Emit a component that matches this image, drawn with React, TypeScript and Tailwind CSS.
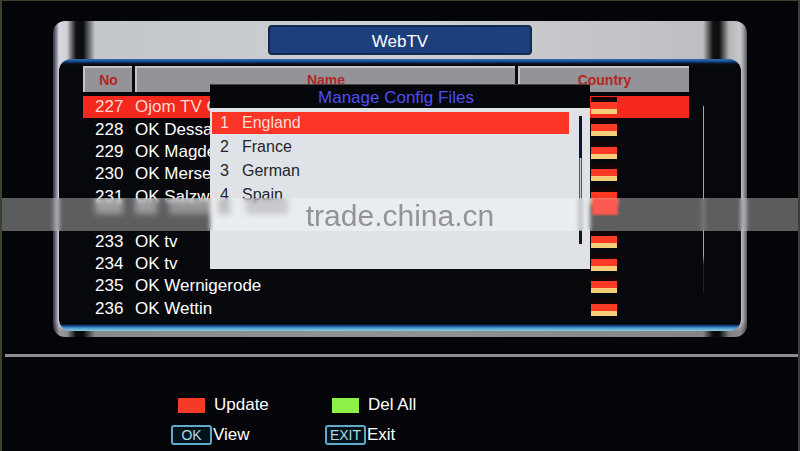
import clsx from 'clsx';

type Channel = { no: number; name: string; hidden?: boolean };

const CHANNELS: Channel[] = [
  { no: 227, name: 'Ojom TV G' },
  { no: 228, name: 'OK Dessa' },
  { no: 229, name: 'OK Magde' },
  { no: 230, name: 'OK Merse' },
  { no: 231, name: 'OK Salzw' },
  { no: 232, name: '', hidden: true },
  { no: 233, name: 'OK tv' },
  { no: 234, name: 'OK tv' },
  { no: 235, name: 'OK Wernigerode' },
  { no: 236, name: 'OK Wettin' },
];

const CONFIG_FILES = ['England', 'France', 'German', 'Spain'];

export default function App() {
  return (
    <div className="relative min-h-screen overflow-hidden border-x-2 border-t border-[#3b4130] bg-[#040509] font-['Liberation_Sans',Arial,sans-serif] text-white">
      <main className="mx-[51px] mt-5 rounded-[12px] bg-[linear-gradient(180deg,transparent_300px,rgba(0,0,0,0.3)_310px),linear-gradient(90deg,#33333f_0,#77778a_3px,#d8d9e2_6px,#cfd1d5_14px,#777_18px,#101114_23px,#08090c_30px,#c3c7ca_42px,#cdd1d4_50%,#bfbfc3_calc(100%-44px),#111_calc(100%-34px),#0c0c0e_calc(100%-28px),#b5b5b8_calc(100%-18px),#c9c9cc_calc(100%-7px),#a5a5ac_calc(100%-4px),#55555e_100%)] px-[6px] pb-[6px]">
        <header className="flex h-[38px] items-center justify-center">
          <h1 className="h-[30px] w-[264px] rounded-[4px] border-2 border-[#122a50] bg-[#1c3f7c] text-center text-[17px] leading-[29px]">
            WebTV
          </h1>
        </header>
        <section className="flex h-[272px] rounded-[12px] bg-[linear-gradient(180deg,#2a6cb0_0,#1f5a9c_2px,#0a1c3c_4px,#07080c_6px,#07080c_calc(100%-7px),#124d96_calc(100%-5px),#4b9ccb_calc(100%-3px),#8fcbe0_100%)] pt-[7px] pr-[37px] pl-[24px]">
          <ChannelTable />
          <div className="mt-[40px] ml-[14px] h-[187px] w-px bg-linear-to-b from-[#a5a5a8] from-80% to-[#1c1c4c] to-85%" />
        </section>
      </main>

      <ConfigDialog />

      <hr className="mt-[17px] ml-[3px] h-[3px] border-0 bg-[#8f8d92]" />
      <Legend />
      <Watermark />
    </div>
  );
}

function ChannelTable() {
  const head =
    'h-[26px] border-t-2 border-l-2 border-[#c4c4c9] bg-[#939398] text-[14px] leading-[24px] font-bold text-[#b3261f]';
  return (
    <table className="h-[254px] flex-1 table-fixed border-collapse text-[17px] leading-[22px]">
      <thead>
        <tr className="h-[30px] align-top">
          <th className="w-[52px] p-0">
            <div className={clsx(head, 'mr-[3px]')}>No</div>
          </th>
          <th className="p-0">
            <div className={clsx(head, 'mr-[3px]')}>Name</div>
          </th>
          <th className="w-[171px] p-0">
            <div className={head}>Country</div>
          </th>
        </tr>
      </thead>
      <tbody>
        {CHANNELS.map((c, i) => (
          <tr key={c.no} className={clsx(i === 0 && 'bg-[#f5281e] text-[#ffd9d2]')}>
            <td className="p-0 pl-[12px]">{c.hidden ? <>&nbsp;</> : c.no}</td>
            <td className="p-0 whitespace-nowrap">{c.name}</td>
            <td className="p-0 pt-px pl-[73px] align-top">{!c.hidden && <Flag />}</td>
          </tr>
        ))}
      </tbody>
    </table>
  );
}

function Flag() {
  return (
    <div className="flex w-[26px] flex-col">
      <i className="h-[5px] bg-[#140606]" />
      <i className="h-[7px] bg-[#fb3a26]" />
      <i className="h-[5px] bg-[#f6cd79]" />
    </div>
  );
}

function ConfigDialog() {
  return (
    <div
      role="dialog"
      aria-labelledby="config-title"
      className="absolute inset-x-0 top-[83px] mx-auto w-[380px] border-t border-[#45454a] bg-[#06070b]"
    >
      <h2 id="config-title" className="h-[23px] pr-2 text-center text-[17px] leading-[25px] text-[#4f4df5]">
        Manage Config Files
      </h2>
      <div className="flex h-[161px] justify-between bg-[#dfe3e7] pt-1 pr-2 pl-[2px]">
        <ul className="w-[357px]">
          {CONFIG_FILES.map((file, i) => (
            <li key={file} className="h-6">
              <button
                className={clsx(
                  'flex h-[22px] w-full items-center pl-2 text-left text-[16px]',
                  i === 0 ? 'bg-[#fc3527] text-[#ffdcd6]' : 'text-[#22252e]',
                )}
              >
                <span className="w-[22px]">{i + 1}</span>
                {file}
              </button>
            </li>
          ))}
        </ul>
        <div className="mt-1 flex h-[128px] w-[3px] flex-col">
          <div className="h-[42px] bg-[#10142c]" />
          <div className="flex-1 border-x border-[#55565c] bg-[#c9cacf]" />
          <div className="h-[14px] bg-[#15161c]" />
        </div>
      </div>
    </div>
  );
}

function Legend() {
  const row = 'flex h-[30px] items-center';
  const key =
    'h-[20px] w-[41px] rounded-[3px] border-2 border-[#5fa9c9] bg-[#03121a] text-center font-[inherit] text-[14px] leading-[17px] text-[#a9dfe2]';
  return (
    <footer className="mt-[33px] ml-[169px] grid w-[308px] grid-cols-2 text-[17px]">
      <button className={clsx(row, 'gap-[9px] pl-[7px]')}>
        <span className="h-[15px] w-[27px] bg-[#f53a25]" />
        Update
      </button>
      <button className={clsx(row, 'gap-[9px] pl-[7px]')}>
        <span className="h-[15px] w-[27px] bg-[#8df046]" />
        Del All
      </button>
      <button className={clsx(row, 'gap-px')}>
        <kbd className={key}>OK</kbd>
        View
      </button>
      <button className={clsx(row, 'gap-px')}>
        <kbd className={key}>EXIT</kbd>
        Exit
      </button>
    </footer>
  );
}

// Translucent strip across the screen; the rows under it fade into soft smears.
function Watermark() {
  return (
    <div className="absolute inset-x-0 top-[197px] h-[33px] overflow-hidden bg-white/35 backdrop-blur-[2px]">
      <div className="absolute top-0 left-[93px] flex h-[16px] gap-3 blur-[3px]">
        <i className="w-[28px] bg-white/40" />
        <i className="w-[22px] bg-white/40" />
        <i className="w-[46px] bg-white/35" />
      </div>
      <div className="absolute top-0 left-1/2 ml-[-182px] flex h-[16px] gap-4 blur-[3px]">
        <i className="w-[12px] bg-black/20" />
        <i className="w-[42px] bg-black/15" />
      </div>
      <div className="absolute top-0 right-[180px] h-[17px] w-[26px] bg-[#fb5a50] blur-[1px]" />
      <p className="relative text-center text-[30px] leading-[35px] text-[#929397]">trade.china.cn</p>
    </div>
  );
}
